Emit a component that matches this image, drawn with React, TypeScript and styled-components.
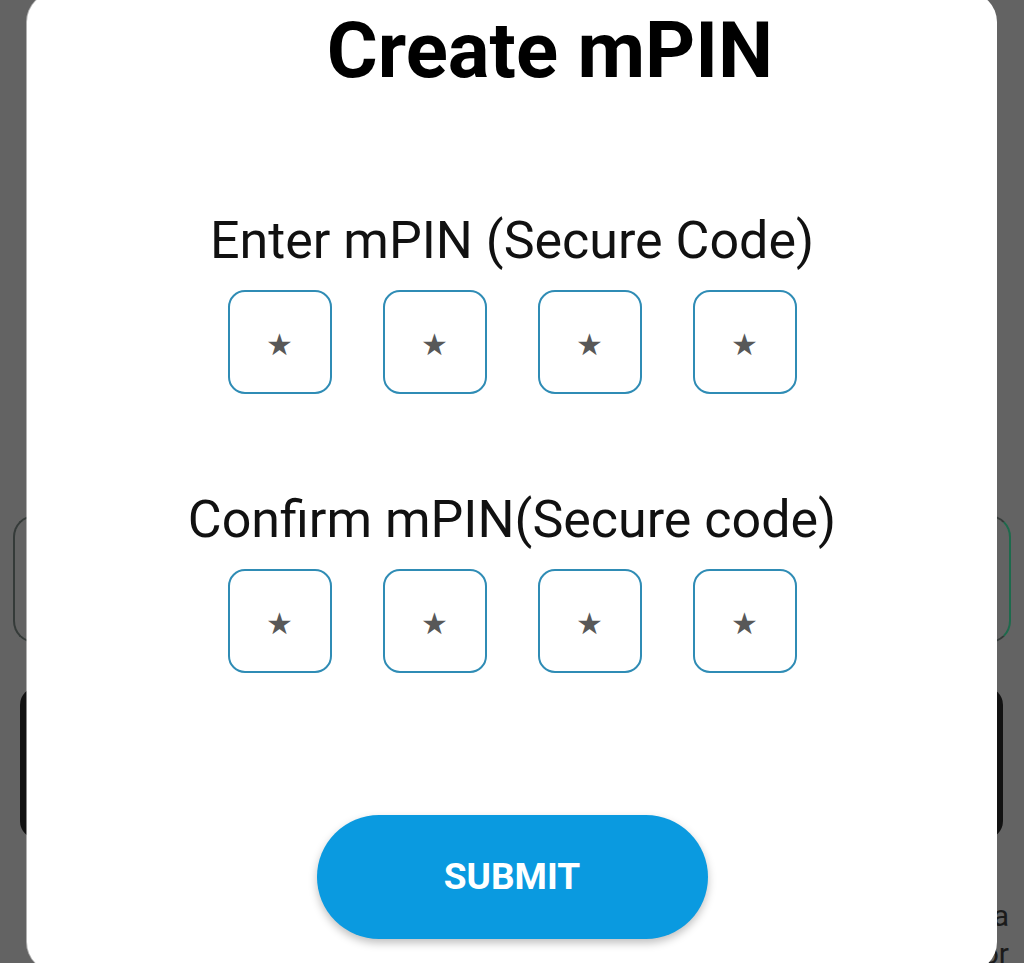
import React from "react";
import styled, { createGlobalStyle } from "styled-components";

const GlobalStyle = createGlobalStyle`
    html, body {
        margin: 0;
        padding: 0;
        background: #636363;
    }
    * {
        box-sizing: border-box;
    }
`;

const Screen = styled.div`
    position: relative;
    width: 1024px;
    height: 963px;
    overflow: hidden;
    background: #636363;
    font-family: Roboto, "Liberation Sans", sans-serif;
`;

// dimmed page behind the dialog
const Page = styled.div`
    display: flex;
    flex-direction: column;
    padding: 515px 13px 0;
`;

const PhoneField = styled.div`
    height: 128px;
    border: 2px solid #353b39;
    border-right-color: #1d6a4c;
    border-radius: 22px;
`;

const DarkButton = styled.div`
    height: 152px;
    margin: 44px 8px 0 7px;
    background: #121212;
    border-radius: 18px;
`;

const Footnote = styled.p`
    margin: 58px 0 0;
    padding-right: 2px;
    text-align: right;
    color: #1b1b1b;
    font-size: 30px;
    line-height: 38px;
`;

const Dialog = styled.div`
    position: absolute;
    left: 27px;
    top: -8px;
    width: 970px;
    height: 980px;
    background: #ffffff;
    border-radius: 30px;
    box-shadow: -1px 0 0 rgba(255, 255, 255, 0.5);
    display: flex;
    flex-direction: column;
    align-items: center;
    padding-top: 12px;
`;

const Title = styled.h1`
    margin: 0;
    padding-left: 76px;
    font-size: 78px;
    line-height: 1.2;
    font-weight: 700;
    color: #000;
`;

const Label = styled.div<{ $top: number }>`
    margin-top: ${(p) => p.$top}px;
    font-size: 52px;
    line-height: 62px;
    color: #111;
`;

const PinRow = styled.div`
    display: flex;
    gap: 51px;
    margin-top: 18px;
`;

const PinBox = styled.div`
    width: 104px;
    height: 104px;
    border: 2px solid #2f8cb5;
    border-radius: 17px;
    display: flex;
    align-items: center;
    justify-content: center;
    padding-top: 6px;
    color: #585858;
    font-family: "DejaVu Sans", sans-serif;
    font-size: 30px;
`;

const SubmitButton = styled.button`
    margin-top: 142px;
    width: 391px;
    height: 124px;
    border: none;
    border-radius: 62px;
    background: #0a9ae0;
    color: #fff;
    font-family: Roboto, "Liberation Sans", sans-serif;
    font-size: 37px;
    font-weight: 700;
    box-shadow: 0 4px 8px rgba(0, 0, 0, 0.25);
    cursor: pointer;
`;

const PinInputs = () => (
    <PinRow>
        {[0, 1, 2, 3].map((i) => (
            <PinBox key={i}>★</PinBox>
        ))}
    </PinRow>
);

const App = () => {
    return (
        <Screen>
            <GlobalStyle />
            <Page>
                <PhoneField />
                <DarkButton />
                <Footnote>
                    Please keep your secure code safe and do not share it with a
                    <br />
                    member of the bank staff or anyone else for
                </Footnote>
            </Page>
            <Dialog>
                <Title>Create mPIN</Title>
                <Label $top={112}>Enter mPIN (Secure Code)</Label>
                <PinInputs />
                <Label $top={95}>Confirm mPIN(Secure code)</Label>
                <PinInputs />
                <SubmitButton>SUBMIT</SubmitButton>
            </Dialog>
        </Screen>
    );
};

export default App;
